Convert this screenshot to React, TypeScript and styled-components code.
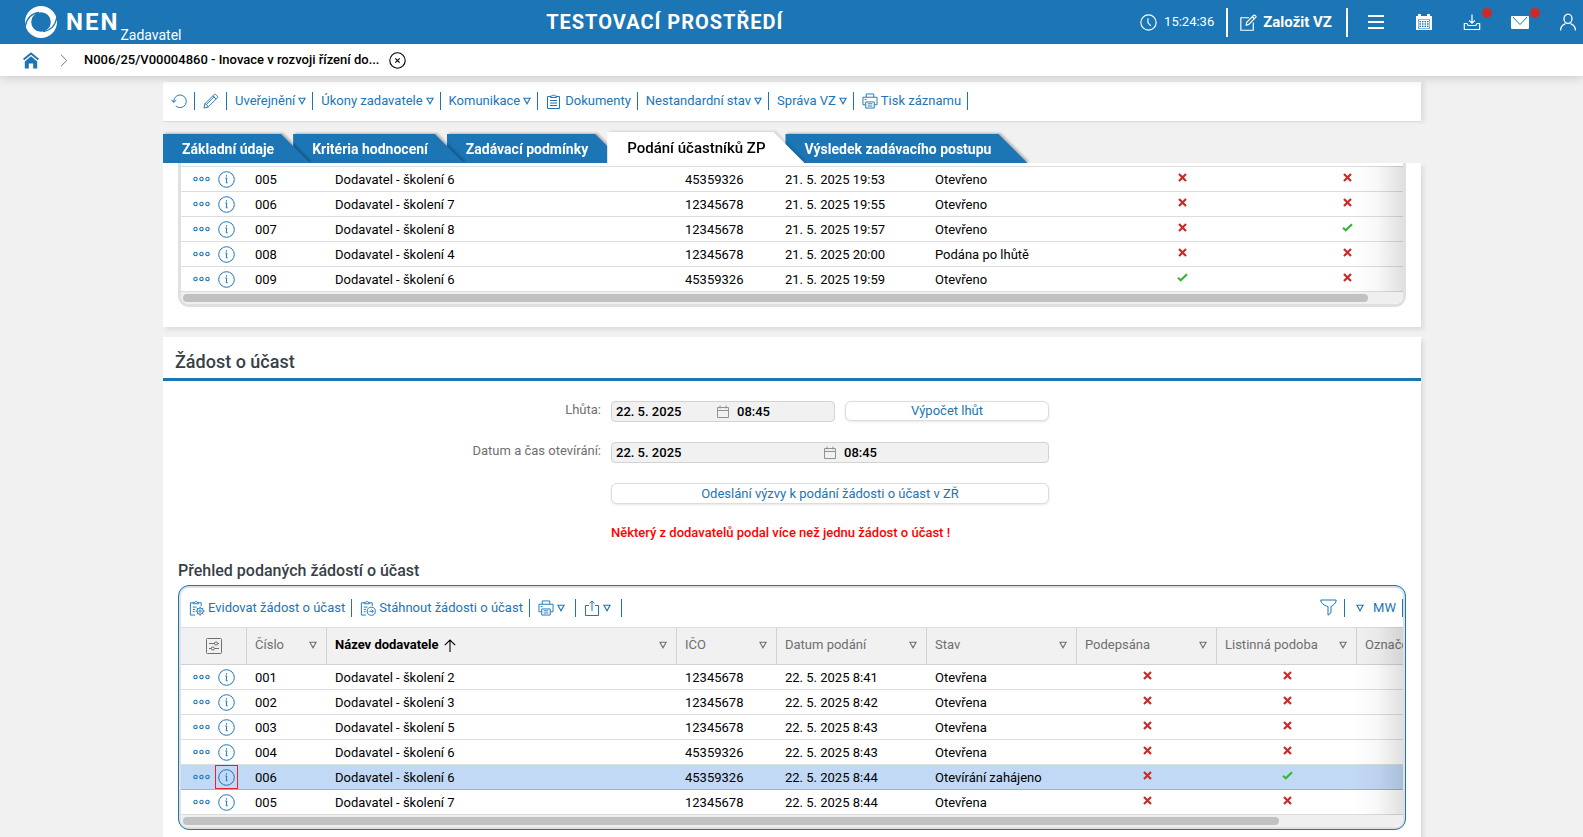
import React from "react";
import styled, { createGlobalStyle, css } from "styled-components";

const c = {
  blue: "#1c75b4",
  page: "#f1f1f1",
  line: "#dcdddf",
  frame: "#dfe0e2",
  grey: "#6f6f6f",
  heading: "#373f47",
  red: "#cb2a2a",
  green: "#37b637",
  selected: "#c2d9f5",
};

const GlobalStyle = createGlobalStyle`
  *, *::before, *::after { box-sizing: border-box; }
  body {
    margin: 0;
    background: ${c.page};
    color: #000;
    font: 400 13px/18px Roboto, "Liberation Sans", sans-serif;
  }
  button, input { font: inherit; color: inherit; }
  button { background: none; border: 0; padding: 0; cursor: pointer; }
  a { color: inherit; text-decoration: none; }
  h1, h2, h3, p { margin: 0; }
  svg { display: block; flex: none; }
`;

const Shell = styled.div`
  height: 100vh;
  display: flex;
  flex-direction: column;
  overflow: hidden;
`;

/* ---------- top bar ---------- */

const TopBar = styled.header`
  flex: none;
  height: 44px;
  display: flex;
  justify-content: space-between;
  align-items: center;
  padding: 0 6px 0 24px;
  background: ${c.blue};
  color: #fff;
  position: relative;
  z-index: 3;
`;

const Brand = styled.a`
  display: flex;
  align-items: center;
  height: 44px;
  padding-right: 8px;
`;

const BrandName = styled.span`
  margin-left: 8px;
  font-size: 24px;
  line-height: 44px;
  font-weight: 700;
  letter-spacing: 2px;
`;

const BrandRole = styled.span`
  align-self: flex-end;
  margin-left: 1px;
  font-size: 14px;
  line-height: 18px;
`;

const Environment = styled.h1`
  font-size: 20px;
  line-height: 44px;
  font-weight: 700;
  letter-spacing: 1px;
`;

const TopActions = styled.div`
  display: flex;
  align-items: center;
  justify-content: flex-end;
`;

const Clock = styled.time`
  display: flex;
  align-items: center;
  gap: 7px;
  padding-right: 12px;
`;

const CreateButton = styled.button`
  display: flex;
  align-items: center;
  gap: 6px;
  height: 29px;
  padding: 0 14px 0 12px;
  border: solid #fff;
  border-width: 0 2px;
  font-size: 15px;
  font-weight: 700;
`;

const TopIcons = styled.nav`
  display: flex;
  gap: 30px;
  margin-left: 19px;
`;

const TopIcon = styled.button`
  position: relative;
  width: 18px;
  height: 18px;
`;

const Badge = styled.span`
  position: absolute;
  top: -5px;
  right: -11px;
  width: 10px;
  height: 10px;
  border-radius: 50%;
  background: ${c.red};
`;

/* ---------- breadcrumb ---------- */

const Breadcrumb = styled.nav`
  flex: none;
  height: 32px;
  display: flex;
  align-items: center;
  padding-left: 23px;
  background: #fff;
  box-shadow: 0 0 12px rgba(0, 0, 0, 0.22);
  position: relative;
  z-index: 2;
`;

const Crumb = styled.a`
  margin: 0 10px 0 16px;
  font-weight: 500;
`;

const HomeLink = styled.a`
  margin-right: 21px;
  color: ${c.blue};
`;

/* ---------- page ---------- */

const Main = styled.main`
  flex: 1;
  min-height: 0;
  overflow: hidden;
  padding: 6px 162px 0 163px;
`;

const RecordBar = styled.div`
  display: flex;
  align-items: center;
  height: 40px;
  padding-bottom: 2px;
  background: #fff;
  border-bottom: 1px solid ${c.line};
  box-shadow: 4px 0 4px rgba(0, 0, 0, 0.07);
`;

type ToolKind = "text" | "icon" | "iconMenu" | "view";

const toolPadding: Record<ToolKind, string> = {
  text: "0 6px 0 8px",
  icon: "0 7px 0 8px",
  iconMenu: "0 10px 0 8px",
  view: "0 6px 0 11px",
};

const Tool = styled.button<{ $kind?: ToolKind }>`
  display: flex;
  align-items: center;
  gap: ${(p) => (p.$kind === "view" ? 9 : 3)}px;
  height: 18px;
  padding: ${(p) => toolPadding[p.$kind ?? "text"]};
  border-right: 1px solid ${c.blue};
  color: ${c.blue};
  white-space: nowrap;
`;

const Tabs = styled.div`
  display: flex;
  align-items: flex-end;
  height: 41px;
  overflow: hidden;
  position: relative;
`;

const TabSlot = styled.div<{ $order: number; $active?: boolean }>`
  position: relative;
  z-index: ${(p) => p.$order};
  margin-right: ${(p) => (p.$active ? "-19px" : "-17px")};
  filter: drop-shadow(2px -1px 1px rgba(0, 0, 0, ${(p) => (p.$active ? 0.12 : 0.25)}));
`;

const Tab = styled.button<{ $active?: boolean }>`
  display: block;
  height: ${(p) => (p.$active ? 31 : 29)}px;
  padding: ${(p) => (p.$active ? "0 39px 0 20px" : "0 36px 0 19px")};
  background: ${(p) => (p.$active ? "#fff" : c.blue)};
  color: ${(p) => (p.$active ? "#000" : "#fff")};
  font-size: ${(p) => (p.$active ? 15 : 14)}px;
  font-weight: ${(p) => (p.$active ? 500 : 700)};
  white-space: nowrap;
  clip-path: polygon(0 0, calc(100% - ${(p) => (p.$active ? 31 : 29)}px) 0, 100% 100%, 0 100%);
`;

const Panel = styled.section`
  background: #fff;
  box-shadow: 3px 3px 4px rgba(0, 0, 0, 0.08);
  padding-bottom: 20px;
  & + & { margin-top: 10px; }
`;

const PanelTitle = styled.h2`
  height: 44px;
  padding: 6px 12px 0;
  border-bottom: 3px solid ${c.blue};
  color: ${c.heading};
  font-size: 18px;
  line-height: 38px;
  font-weight: 500;
`;

/* ---------- deadline form ---------- */

const Form = styled.form`
  display: grid;
  grid-template-columns: 438px 438px;
  gap: 20px 10px;
  padding-top: 20px;
`;

const Label = styled.label`
  color: ${c.grey};
  text-align: right;
`;

const Controls = styled.div`
  grid-column: 2;
  display: flex;
  gap: 10px;
  min-width: 0;
`;

const DateBox = styled.div`
  flex: 1;
  min-width: 0;
  display: flex;
  align-items: center;
  height: 21px;
  border: 1px solid #d3d3d3;
  border-radius: 4px;
  background: ${c.page};
`;

const DateInput = styled.input<{ $time?: boolean }>`
  flex: 1;
  width: 0;
  min-width: 0;
  height: 18px;
  padding: 0;
  text-indent: ${(p) => (p.$time ? 8 : 4)}px;
  border: 0;
  outline: 0;
  background: none;
  font-weight: 500;
`;

const FormButton = styled.button<{ $full?: boolean }>`
  flex: none;
  width: ${(p) => (p.$full ? "100%" : "204px")};
  height: ${(p) => (p.$full ? 21 : 20)}px;
  border: 1px solid ${c.line};
  border-radius: 6px;
  background: #fff;
  box-shadow: 0 1px 3px rgba(0, 0, 0, 0.1);
  color: ${c.blue};
  white-space: nowrap;
`;

const Warning = styled.p`
  grid-column: 2;
  color: #f00;
  font-weight: 500;
`;

const TableTitle = styled.h3`
  margin: 19px 15px 4px;
  color: ${c.heading};
  font-size: 16px;
  line-height: 20px;
  font-weight: 500;
`;

/* ---------- data grid ---------- */

const Frame = styled.div<{ $focused?: boolean }>`
  margin: 0 15px;
  border: 1px solid ${(p) => (p.$focused ? c.blue : c.frame)};
  border-radius: 11px;
  padding: 2px;
  background: ${c.frame};
  ${(p) => !p.$focused && css`
    border-top: 0;
    padding-top: 0;
    border-top-left-radius: 0;
    border-top-right-radius: 0;
  `}
`;

const FrameBody = styled.div<{ $focused?: boolean }>`
  overflow: hidden;
  border-radius: ${(p) => (p.$focused ? "8px" : "0 0 8px 8px")};
  background: #fff;
  padding-top: ${(p) => (p.$focused ? 0 : 3)}px;
`;

const GridBar = styled.div`
  display: flex;
  align-items: center;
  justify-content: space-between;
  height: 39px;
`;

const ToolGroup = styled.div`
  display: flex;
`;

const GridView = styled.div`
  position: relative;
  overflow: hidden;
  &::after {
    content: "";
    position: absolute;
    inset: 0 0 0 auto;
    width: 50px;
    background: linear-gradient(to right, rgba(0, 0, 0, 0), rgba(0, 0, 0, 0.03) 50%, rgba(0, 0, 0, 0.12));
    pointer-events: none;
  }
`;

const Table = styled.table`
  table-layout: fixed;
  width: 0;
  min-width: 100%;
  border-collapse: separate;
  border-spacing: 0;
  border-top: 1px solid ${c.line};
`;

const HeadCell = styled.th<{ $sorted?: boolean }>`
  height: 37px;
  padding: 0 9px 0 8px;
  border: solid #d0d1d3;
  border-width: 0 1px 1px 0;
  background: ${c.page};
  color: ${(p) => (p.$sorted ? "#000" : c.grey)};
  font-weight: ${(p) => (p.$sorted ? 700 : 400)};
  text-align: left;
  white-space: nowrap;
`;

const HeadContent = styled.div<{ $center?: boolean }>`
  display: flex;
  align-items: center;
  justify-content: ${(p) => (p.$center ? "center" : "space-between")};
  padding: ${(p) => (p.$center ? "0 0 0 2px" : "0 0 2px")};
`;

const HeadLabel = styled.span`
  display: flex;
  align-items: center;
  gap: 5px;
`;

const HeadMenu = styled.button`
  color: ${c.grey};
`;

const Row = styled.tr<{ $selected?: boolean }>`
  background: ${(p) => (p.$selected ? c.selected : "#fff")};
  --edge: ${(p) => (p.$selected ? "#8cb5e9" : c.line)};
`;

const Cell = styled.td`
  height: 25px;
  padding: 1px 8px 0;
  border-bottom: 1px solid var(--edge);
  line-height: 16px;
  white-space: nowrap;
`;

const ActionCell = styled(Cell)`
  padding: 0 8px 0 12px;
`;

const MarkCell = styled(Cell)`
  padding: 0 0 3px;
`;

const RowActions = styled.div`
  display: flex;
  align-items: center;
  gap: 5px;
  color: ${c.blue};
`;

const InfoButton = styled.button<{ $marked?: boolean }>`
  display: grid;
  place-items: center;
  width: 23px;
  height: 24px;
  border: 1px solid ${(p) => (p.$marked ? "#e5202b" : "transparent")};
`;

const Center = styled.div`
  display: grid;
  place-items: center;
`;

const Track = styled.div`
  height: 12px;
  padding: 2px;
  background: #efefef;
`;

const Thumb = styled.div<{ $share: number }>`
  width: ${(p) => p.$share}%;
  height: 8px;
  border-radius: 4px;
  background: #c1c1c1;
`;

/* ---------- icons ---------- */

type IconProps = { size?: number; box?: string; sw?: number; children: React.ReactNode };
const Icon = ({ size = 16, box = "0 0 16 16", sw = 1, children }: IconProps) => (
  <svg width={size} height={size} viewBox={box} fill="none" stroke="currentColor" strokeWidth={sw} aria-hidden="true">
    {children}
  </svg>
);

const Triangle = () => (
  <svg width="8" height="8" viewBox="0 0 8 8" fill="none" stroke="currentColor" strokeWidth="1.1" aria-hidden="true">
    <path d="M.9 1.200h6.200L4 6.800z" />
  </svg>
);

const LogoIcon = () => (
  <svg width="34" height="34" viewBox="0 0 34 34" aria-hidden="true">
    <path fill="#fff" fillRule="evenodd" d="M17 1a16 16 0 1 1 0 32a16 16 0 1 1 0-32zM17 7.200a9.800 9.800 0 1 0 0 19.600a9.800 9.800 0 1 0 0-19.600z" />
    <path d="M1.200 21.500C2.500 14.500 7 8.500 15 7.400M32.800 12.500C31.500 19.500 27 25.500 19 26.600" fill="none" stroke={c.blue} strokeWidth="1.300" />
    <path d="M0 18l1.500 6M34 16l-1.500-6" stroke={c.blue} strokeWidth="1" />
  </svg>
);

const ClockIcon = () => (
  <Icon size={17} sw={1.1}><circle cx="8" cy="8" r="7.200" /><path d="M7.500 4v4.300l2.800 2.900" /></Icon>
);
const EditIcon = () => (
  <Icon size={17} sw={1.1}>
    <path d="M8.500 3.500H.8v11.800h11.700V8" />
    <path d="M5.800 10.500l.5-2.600L13 1.200c.7-.7 2.600 1 1.900 1.800L8.300 9.800z" />
    <path d="M11.600 2.700l1.900 1.800" />
  </Icon>
);
const MenuIcon = () => <Icon size={18} box="0 0 18 18" sw={2}><path d="M1 3h16M1 9h16M1 15h16" /></Icon>;
const CalendarSolid = () => (
  <Icon size={18} box="0 0 18 18" sw={0}>
    <path fill="currentColor" fillRule="evenodd" d="M1 3h2V1h3v2h6V1h3v2h2v14H1zM3 6.500v9h12v-9z" />
    <path d="M4 7.500h10v7H4zM4 9.800h10M4 12.200h10M6.500 7.500v7M9 7.500v7M11.500 7.500v7" stroke="currentColor" strokeWidth="1" />
  </Icon>
);
const DownloadIcon = () => (
  <Icon size={18} box="0 0 18 18" sw={1.2}>
    <path d="M9 1.500v8.500M6.200 7.500L9 10.200l2.800-2.700" />
    <path d="M4 10.500H1.300v6h15.400v-6H14l-1.200 2H5.200z" strokeLinejoin="round" />
  </Icon>
);
const MailIcon = () => (
  <Icon size={18} box="0 0 18 18" sw={0}>
    <rect x="0" y="3" width="18" height="13" rx="1" fill="currentColor" />
    <path d="M2 4l7 7.500L16 4" stroke={c.blue} strokeWidth="1" />
  </Icon>
);
const UserIcon = () => (
  <Icon size={18} box="0 0 18 18" sw={1.3}>
    <ellipse cx="9" cy="5.800" rx="4" ry="4.600" />
    <path d="M1.500 17.500c0-4 2-5.700 5-6.900M16.500 17.500c0-4-2-5.700-5-6.900" />
  </Icon>
);
const HomeIcon = () => (
  <svg width="16" height="17" viewBox="0 0 16 17" aria-hidden="true">
    <path d="M.6 7.600L8 1.500L15.400 7.600" fill="none" stroke="currentColor" strokeWidth="1.900" />
    <path d="M1.800 9.400L8 4.300l6.200 5.100V16.500h-4v-5H5.800v5h-4z" fill="currentColor" />
  </svg>
);
const ChevronIcon = () => (
  <svg width="8" height="13" viewBox="0 0 8 13" fill="none" stroke="#777" strokeWidth="1" aria-hidden="true"><path d="M1 .8l5.800 5.700L1 12.200" /></svg>
);
const CloseIcon = () => (
  <Icon size={17} box="0 0 17 17" sw={1.1}><circle cx="8.500" cy="8.500" r="7.700" /><path d="M6.300 6.300l4.400 4.400M10.700 6.300l-4.400 4.400" /></Icon>
);
const RefreshIcon = () => (
  <Icon box="0 0 17 17"><path d="M2.900 10V8.500A6.700 6.700 0 1 1 5 13.700M.4 7.200l2.500 2.700l2.700-2.400" /></Icon>
);
const PencilIcon = () => (
  <Icon box="0 0 17 17">
    <path d="M1 16l1-4.500L12 1.500c1-1 4.400 2.200 3.400 3.400L5.400 15zM10.500 3l3.500 3.500M2 11.500c1.600.3 3 1.700 3.400 3.500M4 11.800l8-8" />
  </Icon>
);
const ClipboardIcon = () => (
  <Icon box="0 0 16 16"><path d="M4.500 3.500H1.500v12h12v-12h-3M4.500 4.500V3h1.700a1.400 1.400 0 0 1 2.600 0h1.700v1.500zM4 7.500h7M4 10h7M4 12.500h7" /></Icon>
);
const PrinterIcon = () => (
  <Icon box="0 0 17 17"><path d="M4.500 4.500V1h8v3.500M4 12.500H1V4.500h15v8h-3M4 9.500h9v6.500H4zM6 11.500h5M6 13.800h5M2.800 7h2" /></Icon>
);
const ClipGear = () => (
  <Icon box="0 0 17 17">
    <path d="M4.500 3H1.500v13h5M10 3h3v3.500M4.500 4V2.500h1.500a1.300 1.300 0 0 1 2.500 0H10V4zM4 7.500h4M4 10h2.500M4 12.500h2" />
    <circle cx="11.800" cy="11.800" r="3.300" /><circle cx="11.800" cy="11.800" r="1.200" />
    <path d="M11.800 7v1.500M11.800 15v1.800M7 11.800h1.500M15 11.800h1.800M8.400 8.400l1 1M14.200 14.200l1 1M8.400 15.200l1-1M14.200 9.400l1-1" />
  </Icon>
);
const ClipArrow = () => (
  <Icon box="0 0 17 17">
    <path d="M4.500 3H1.500v13h5M10 3h3v3.500M4.500 4V2.500h1.500a1.300 1.300 0 0 1 2.500 0H10V4zM4 7.500h4M4 10h2.500M4 12.500h2" />
    <circle cx="12" cy="12" r="4.300" /><path d="M9.800 12h4.200M12.300 10.200L14.200 12l-1.900 1.800" />
  </Icon>
);
const ShareIcon = () => (
  <Icon size={16}><path d="M5 5.500H1.500v10h13v-10H11M8 11V1M5.500 3.300L8 .9l2.500 2.400" /></Icon>
);
const FilterIcon = () => (
  <Icon size={17} box="0 0 17 17"><path d="M.8 1h15.400c0 3.200-2.700 5.300-5.200 6.500v6.200l-3 2.500V7.500C4 6.500.8 4.200.8 1z" /></Icon>
);
const SettingsIcon = () => (
  <Icon><rect x=".5" y=".5" width="15" height="15" rx="1" /><path d="M3 5.500h5.500M11.500 5.500H13M3 10.500h2.200M8.500 10.500H13" /><circle cx="10" cy="5.500" r="1.600" /><circle cx="6.800" cy="10.500" r="1.600" /></Icon>
);
const ArrowUp = () => (
  <svg width="12" height="13" viewBox="0 0 12 13" fill="none" stroke="currentColor" strokeWidth="1.100" aria-hidden="true"><path d="M6 13V1M.8 6.200L6 1l5.200 5.200" /></svg>
);
const CalendarOutline = () => (
  <svg width="12" height="13" viewBox="0 0 12 13" fill="none" stroke="#929292" strokeWidth="1" aria-hidden="true"><path d="M.5 2.500h11v10H.5zM.5 5.500h11M3 .5v3M9 .5v3" /></svg>
);
const DotsIcon = () => (
  <svg width="17" height="6" viewBox="0 0 17 6" fill="none" stroke="currentColor" strokeWidth="1.100" aria-hidden="true">
    <circle cx="2.500" cy="3" r="1.700" /><circle cx="8.500" cy="3" r="1.700" /><circle cx="14.500" cy="3" r="1.700" />
  </svg>
);
const InfoIcon = () => (
  <Icon size={17} box="0 0 17 17"><circle cx="8.500" cy="8.500" r="7.800" /><path d="M7.300 7h1.500l-.6 4.800h1.500M8.500 4.200v1.400" /></Icon>
);
const Cross = () => (
  <svg width="9" height="9" viewBox="0 0 9 9" role="img" aria-label="Ne"><path d="M1 1l7 7M8 1L1 8" stroke={c.red} strokeWidth="2.200" /></svg>
);
const Check = () => (
  <svg width="11" height="9" viewBox="0 0 11 9" role="img" aria-label="Ano"><path d="M1 4.800l2.800 2.500L10 1.300" fill="none" stroke={c.green} strokeWidth="2.200" /></svg>
);

/* ---------- data ---------- */

type Entry = { no: string; name: string; ico: string; date: string; state: string; a: boolean; b: boolean; selected?: boolean };

const offers: Entry[] = [
  { no: "005", name: "Dodavatel - školení 6", ico: "45359326", date: "21. 5. 2025 19:53", state: "Otevřeno", a: false, b: false },
  { no: "006", name: "Dodavatel - školení 7", ico: "12345678", date: "21. 5. 2025 19:55", state: "Otevřeno", a: false, b: false },
  { no: "007", name: "Dodavatel - školení 8", ico: "12345678", date: "21. 5. 2025 19:57", state: "Otevřeno", a: false, b: true },
  { no: "008", name: "Dodavatel - školení 4", ico: "12345678", date: "21. 5. 2025 20:00", state: "Podána po lhůtě", a: false, b: false },
  { no: "009", name: "Dodavatel - školení 6", ico: "45359326", date: "21. 5. 2025 19:59", state: "Otevřeno", a: true, b: false },
];

const requests: Entry[] = [
  { no: "001", name: "Dodavatel - školení 2", ico: "12345678", date: "22. 5. 2025 8:41", state: "Otevřena", a: false, b: false },
  { no: "002", name: "Dodavatel - školení 3", ico: "12345678", date: "22. 5. 2025 8:42", state: "Otevřena", a: false, b: false },
  { no: "003", name: "Dodavatel - školení 5", ico: "12345678", date: "22. 5. 2025 8:43", state: "Otevřena", a: false, b: false },
  { no: "004", name: "Dodavatel - školení 6", ico: "45359326", date: "22. 5. 2025 8:43", state: "Otevřena", a: false, b: false },
  { no: "006", name: "Dodavatel - školení 6", ico: "45359326", date: "22. 5. 2025 8:44", state: "Otevírání zahájeno", a: false, b: true, selected: true },
  { no: "005", name: "Dodavatel - školení 7", ico: "12345678", date: "22. 5. 2025 8:44", state: "Otevřena", a: false, b: false },
];

const tabs = ["Základní údaje", "Kritéria hodnocení", "Zadávací podmínky", "Podání účastníků ZP", "Výsledek zadávacího postupu"];
const activeTab = 3;

const columns = ["Číslo", "Název dodavatele", "IČO", "Datum podání", "Stav", "Podepsána", "Listinná podoba", "Označení"];

const Rows = ({ entries, trailing }: { entries: Entry[]; trailing?: boolean }) => (
  <tbody>
    {entries.map((e) => (
      <Row key={e.no} $selected={e.selected}>
        <ActionCell>
          <RowActions>
            <button type="button" aria-label="Další akce"><DotsIcon /></button>
            <InfoButton type="button" aria-label="Detail" $marked={e.selected}><InfoIcon /></InfoButton>
          </RowActions>
        </ActionCell>
        <Cell>{e.no}</Cell>
        <Cell>{e.name}</Cell>
        <Cell>{e.ico}</Cell>
        <Cell>{e.date}</Cell>
        <Cell>{e.state}</Cell>
        <MarkCell><Center>{e.a ? <Check /> : <Cross />}</Center></MarkCell>
        <MarkCell><Center>{e.b ? <Check /> : <Cross />}</Center></MarkCell>
        {trailing && <Cell />}
      </Row>
    ))}
  </tbody>
);

const Cols = ({ widths }: { widths: number[] }) => (
  <colgroup>{widths.map((w, i) => <col key={i} width={w} />)}</colgroup>
);

export default function App() {
  return (
    <Shell>
      <GlobalStyle />
      <TopBar>
        <Brand href="#">
          <LogoIcon />
          <BrandName>NEN</BrandName>
          <BrandRole>Zadavatel</BrandRole>
        </Brand>
        <Environment>TESTOVACÍ PROSTŘEDÍ</Environment>
        <TopActions>
          <Clock><ClockIcon />15:24:36</Clock>
          <CreateButton type="button"><EditIcon />Založit VZ</CreateButton>
          <TopIcons>
            <TopIcon aria-label="Menu"><MenuIcon /></TopIcon>
            <TopIcon aria-label="Kalendář"><CalendarSolid /></TopIcon>
            <TopIcon aria-label="Stažené soubory"><DownloadIcon /><Badge /></TopIcon>
            <TopIcon aria-label="Zprávy"><MailIcon /><Badge /></TopIcon>
            <TopIcon aria-label="Uživatel"><UserIcon /></TopIcon>
          </TopIcons>
        </TopActions>
      </TopBar>

      <Breadcrumb>
        <HomeLink href="#" aria-label="Domů"><HomeIcon /></HomeLink>
        <ChevronIcon />
        <Crumb href="#">N006/25/V00004860 - Inovace v rozvoji řízení do...</Crumb>
        <button type="button" aria-label="Zavřít"><CloseIcon /></button>
      </Breadcrumb>

      <Main>
        <RecordBar>
          <Tool $kind="icon" aria-label="Obnovit"><RefreshIcon /></Tool>
          <Tool $kind="icon" aria-label="Upravit"><PencilIcon /></Tool>
          <Tool>Uveřejnění<Triangle /></Tool>
          <Tool>Úkony zadavatele<Triangle /></Tool>
          <Tool>Komunikace<Triangle /></Tool>
          <Tool><ClipboardIcon />Dokumenty</Tool>
          <Tool>Nestandardní stav<Triangle /></Tool>
          <Tool>Správa VZ<Triangle /></Tool>
          <Tool><PrinterIcon />Tisk záznamu</Tool>
        </RecordBar>

        <Tabs role="tablist">
          {tabs.map((name, i) => (
            <TabSlot key={name} $active={i === activeTab} $order={i === activeTab ? tabs.length + 1 : tabs.length - i}>
              <Tab type="button" role="tab" aria-selected={i === activeTab} $active={i === activeTab}>{name}</Tab>
            </TabSlot>
          ))}
        </Tabs>

        <Panel>
          <Frame>
            <FrameBody>
              <GridView>
                <Table>
                  <Cols widths={[66, 80, 350, 100, 150, 150, 210, 120]} />
                  <Rows entries={offers} />
                </Table>
              </GridView>
              <Track><Thumb $share={97.3} /></Track>
            </FrameBody>
          </Frame>
        </Panel>

        <Panel>
          <PanelTitle>Žádost o účast</PanelTitle>
          <Form>
            <Label htmlFor="deadline">Lhůta:</Label>
            <Controls>
              <DateBox>
                <DateInput id="deadline" defaultValue="22. 5. 2025" readOnly />
                <CalendarOutline />
                <DateInput $time aria-label="Čas lhůty" defaultValue="08:45" readOnly />
              </DateBox>
              <FormButton type="button">Výpočet lhůt</FormButton>
            </Controls>
            <Label htmlFor="opening">Datum a čas otevírání:</Label>
            <Controls>
              <DateBox>
                <DateInput id="opening" defaultValue="22. 5. 2025" readOnly />
                <CalendarOutline />
                <DateInput $time aria-label="Čas otevírání" defaultValue="08:45" readOnly />
              </DateBox>
            </Controls>
            <Controls>
              <FormButton type="button" $full>Odeslání výzvy k podání žádosti o účast v ZŘ</FormButton>
            </Controls>
            <Warning>Některý z dodavatelů podal více než jednu žádost o účast !</Warning>
          </Form>

          <TableTitle>Přehled podaných žádostí o účast</TableTitle>
          <Frame $focused>
            <FrameBody $focused>
              <GridBar>
                <ToolGroup>
                  <Tool><ClipGear />Evidovat žádost o účast</Tool>
                  <Tool><ClipArrow />Stáhnout žádosti o účast</Tool>
                  <Tool $kind="iconMenu" aria-label="Tisk"><PrinterIcon /><Triangle /></Tool>
                  <Tool $kind="iconMenu" aria-label="Export"><ShareIcon /><Triangle /></Tool>
                </ToolGroup>
                <ToolGroup>
                  <Tool $kind="icon" aria-label="Filtr"><FilterIcon /></Tool>
                  <Tool $kind="view"><Triangle />MW</Tool>
                </ToolGroup>
              </GridBar>
              <GridView>
                <Table>
                  <Cols widths={[66, 80, 350, 100, 150, 150, 140, 140, 100]} />
                  <thead>
                    <tr>
                      <HeadCell><HeadContent $center><SettingsIcon /></HeadContent></HeadCell>
                      {columns.map((name, i) => (
                        <HeadCell key={name} $sorted={i === 1}>
                          <HeadContent>
                            <HeadLabel>{name}{i === 1 && <ArrowUp />}</HeadLabel>
                            {i < columns.length - 1 && <HeadMenu type="button" aria-label={`Filtr: ${name}`}><Triangle /></HeadMenu>}
                          </HeadContent>
                        </HeadCell>
                      ))}
                    </tr>
                  </thead>
                  <Rows entries={requests} trailing />
                </Table>
              </GridView>
              <Track><Thumb $share={90} /></Track>
            </FrameBody>
          </Frame>
        </Panel>
      </Main>
    </Shell>
  );
}
